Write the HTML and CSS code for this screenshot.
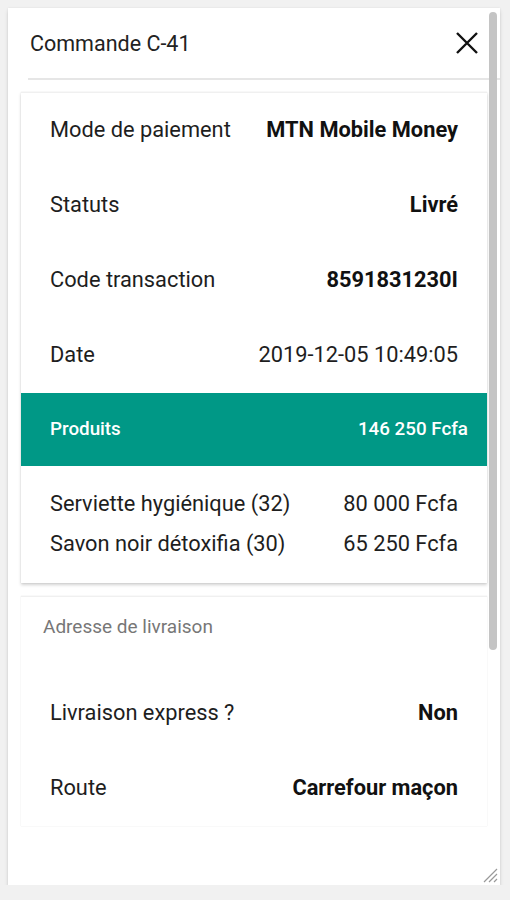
FILE: index.html
```html
<!DOCTYPE html>
<html lang="fr">
<head>
<meta charset="UTF-8">
<meta name="viewport" content="width=device-width, initial-scale=1.0">
<title>Commande C-41</title>
<link rel="stylesheet" href="styles.css">
</head>
<body>
<div class="dialog">
    <div class="dialog-head">
        <div class="dialog-title">Commande C-41</div>
        <button class="close-btn" aria-label="Fermer">
            <svg width="24" height="24" viewBox="0 0 24 24">
                <path d="M2 2 L22 22 M22 2 L2 22" stroke="#111" stroke-width="2.4" fill="none"/>
            </svg>
        </button>
    </div>
    <div class="divider"></div>

    <div class="dialog-body">
        <div class="card">
            <div class="row"><span>Mode de paiement</span><b>MTN Mobile Money</b></div>
            <div class="row"><span>Statuts</span><b>Livré</b></div>
            <div class="row"><span>Code transaction</span><b>8591831230I</b></div>
            <div class="row"><span>Date</span><span>2019-12-05 10:49:05</span></div>
            <div class="band"><span>Produits</span><span>146 250 Fcfa</span></div>
            <div class="products">
                <div class="product"><span>Serviette hygiénique (32)</span><span>80 000 Fcfa</span></div>
                <div class="product"><span>Savon noir détoxifia (30)</span><span>65 250 Fcfa</span></div>
            </div>
        </div>

        <div class="card card-address">
            <div class="card-label">Adresse de livraison</div>
            <div class="row"><span>Livraison express ?</span><b>Non</b></div>
            <div class="row"><span>Route</span><b>Carrefour maçon</b></div>
        </div>
    </div>

    <div class="scrollbar"><div class="thumb"></div></div>
    <svg class="resize" width="18" height="18" viewBox="0 0 18 18">
        <path d="M17 4 L4 17 M17 9 L9 17 M17 14 L14 17" stroke="#999" stroke-width="1.2"/>
    </svg>
</div>
</body>
</html>
```

FILE: styles.css
```css
body {
    margin: 0;
    background: #f1f1f1;
    font-family: Roboto, "Liberation Sans", Arial, sans-serif;
    color: #1e1e1e;
}

.dialog {
    position: relative;
    margin: 8px 0 0 8px;
    width: 492px;
    height: 877px;
    background: #fff;
    box-shadow: 0 3px 4px rgba(0, 0, 0, 0.12), 0 0 2px rgba(0, 0, 0, 0.08);
    overflow: hidden;
}

.dialog-head {
    display: flex;
    align-items: center;
    justify-content: space-between;
    height: 70px;
    padding: 0 21px 0 22px;
}

.dialog-title {
    font-size: 21.5px;
    color: #222;
}

.close-btn {
    border: none;
    background: none;
    padding: 0;
    width: 24px;
    height: 24px;
    cursor: pointer;
}

.divider {
    height: 2px;
    margin-left: 20px;
    background: #e6e6e6;
}

.dialog-body {
    height: 747px;
    overflow: hidden;
    padding: 12px 13px 0 13px;
}

.card {
    background: #fff;
    border-top: 1px solid #f0f0f0;
    box-shadow: 0 2px 3px rgba(0, 0, 0, 0.18), 0 0 1px rgba(0, 0, 0, 0.12);
    margin-bottom: 13px;
}

.row {
    display: flex;
    justify-content: space-between;
    align-items: center;
    height: 75px;
    padding: 0 29px 3px;
    box-sizing: border-box;
    font-size: 21.8px;
}

.row b {
    font-weight: 700;
    color: #111;
}

.band {
    display: flex;
    justify-content: space-between;
    align-items: center;
    height: 73px;
    padding: 0 19px 2px 29px;
    box-sizing: border-box;
    background: #009886;
    color: #fff;
    font-size: 18.8px;
    font-weight: 500;
}

.products {
    padding: 17px 29px 20px;
}

.product {
    display: flex;
    justify-content: space-between;
    align-items: center;
    height: 40px;
    font-size: 21.8px;
}

.card-address {
    box-shadow: 0 0 1px rgba(0, 0, 0, 0.14);
}

.card-label {
    height: 79px;
    padding: 18px 22px 0;
    box-sizing: border-box;
    font-size: 19px;
    color: #777;
}

.scrollbar {
    position: absolute;
    top: 0;
    right: 3px;
    width: 8px;
    height: 100%;
}

.thumb {
    margin-top: 4px;
    height: 638px;
    background: #c4c4c4;
    border-radius: 4px;
}

.resize {
    position: absolute;
    right: 2px;
    bottom: 2px;
}
```
